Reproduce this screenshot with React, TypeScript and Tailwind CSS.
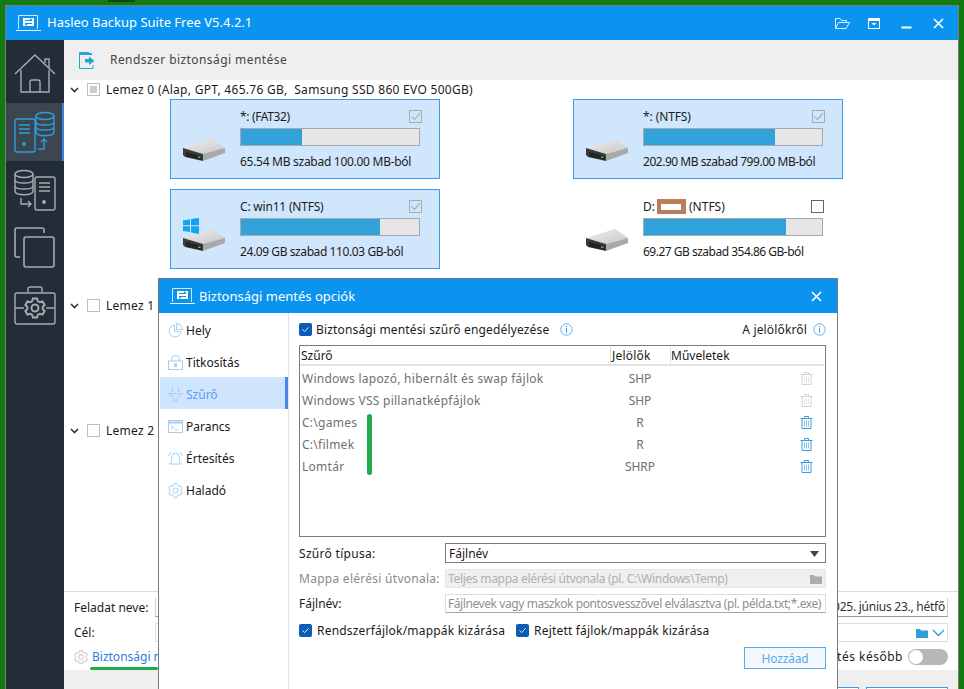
import React from "react";

const Drive = ({ windows = false }: { windows?: boolean }) => (
  <div className="relative h-[30px] w-[44px]">
    <svg className="absolute left-0 top-0" width="44" height="30" viewBox="0 0 44 30">
      <defs>
        <linearGradient id="drv" x1="0" y1="0" x2="1" y2="1">
          <stop offset="0" stopColor="#eeeeee" />
          <stop offset="1" stopColor="#c8c8c8" />
        </linearGradient>
      </defs>
      <path d="M0 17 L29 8 L42 17 L20 23Z" fill="url(#drv)" />
      <path d="M20 23 L42 17 V22 L20 30Z" fill="#a9a9a9" />
      <path d="M0 17 L20 23 V30 L2 26 L0 24Z" fill="#3a3a3a" />
      <path d="M3 21 L19 25 V29 L3 25.5Z" fill="#242424" />
      <rect x="15" y="25.5" width="2.5" height="1.5" fill="#22d33a" />
    </svg>
    {windows && (
      <svg className="absolute left-0 top-[-3px]" width="16" height="16" viewBox="0 0 16 16">
        <path d="M0 2.5 L7 1.3 V7.3 H0Z M8 1.1 L16 0 V7.3 H8Z M0 8.3 H7 V14 L0 13Z M8 8.3 H16 V16 L8 14.6Z" fill="#12a5ee" />
      </svg>
    )}
  </div>
);

const Bar = ({ pct }: { pct: number }) => (
  <div className="h-[18px] w-[180px] border border-[#a8a8a8] bg-[#e6e6e6]">
    <div className="h-full bg-[#31a2da]" style={{ width: `${pct}%` }} />
  </div>
);

const GrayCheck = () => (
  <div className="flex h-[13px] w-[13px] items-center justify-center border border-[#ababab]">
    <svg width="11" height="11" viewBox="0 0 11 11">
      <path d="M1.5 5.5 L4.5 8.5 L10 2" fill="none" stroke="#b5b5b5" strokeWidth="1.3" />
    </svg>
  </div>
);

type CardProps = {
  label: React.ReactNode;
  pct: number;
  text: string;
  selected?: boolean;
  windows?: boolean;
  labelCls: string;
  textCls: string;
};
const Card = ({ label, pct, text, selected = true, windows = false, labelCls, textCls }: CardProps) => (
  <div
    className={
      selected
        ? "flex h-[80px] w-[270px] border border-[#3c9bf0] bg-[#d0e6fc]"
        : "flex h-[80px] w-[270px] border border-white bg-white"
    }
  >
    <div className="w-[69px] pl-[12px] pt-[31px]">
      <Drive windows={windows} />
    </div>
    <div className="flex w-[180px] flex-col">
      <div className="flex h-[28px] items-end justify-between pb-[3px]">
        <span className={"leading-[17px] text-[#1c1c1c] " + labelCls}>{label}</span>
        <div className={selected ? "mb-[2px] mr-[-2px]" : "mb-[2px] mr-[-1px]"}>
          {selected ? <GrayCheck /> : <div className="h-[13px] w-[13px] border border-[#666666]" />}
        </div>
      </div>
      <Bar pct={pct} />
      <div className={"mt-[7px] whitespace-nowrap leading-[17px] text-[#1c1c1c] " + textCls}>{text}</div>
    </div>
  </div>
);

const Chevron = () => (
  <svg width="9" height="6" viewBox="0 0 9 6">
    <path d="M1 1 L4.5 4.5 L8 1" fill="none" stroke="#333333" strokeWidth="1.6" />
  </svg>
);

const DiskHead = ({ text, mixed = false }: { text: string; mixed?: boolean }) => (
  <div className="flex h-[19px] items-center whitespace-pre">
    <div className="ml-[6px] w-[17px]">
      <Chevron />
    </div>
    <div className="flex h-[13px] w-[13px] items-center justify-center border border-[#bdbdbd]">
      {mixed && <div className="h-[7px] w-[7px] bg-[#cccccc]" />}
    </div>
    <span className="ml-[6px] pt-[1px] tracking-[0.28px] text-[#1c1c1c]">{text}</span>
  </div>
);

const BlueCheck = () => (
  <div className="flex h-[13px] w-[13px] shrink-0 items-center justify-center rounded-[2px] bg-[#0b5cb5]">
    <svg width="9" height="9" viewBox="0 0 9 9">
      <path d="M1.5 4.5 L3.6 6.6 L7.5 2.4" fill="none" stroke="#dce9f7" strokeWidth="1" />
    </svg>
  </div>
);

const Info = () => (
  <svg width="13" height="13" viewBox="0 0 13 13">
    <circle cx="6.5" cy="6.5" r="5.7" fill="none" stroke="#62aef2" strokeWidth="1" />
    <rect x="6" y="3" width="1" height="1.2" fill="#3d97ea" />
    <rect x="6" y="5.2" width="1" height="4.6" fill="#3d97ea" />
  </svg>
);

const Trash = ({ active }: { active: boolean }) => {
  const c = active ? "#3a9fdc" : "#d2d2d2";
  return (
    <svg width="13" height="13" viewBox="0 0 13 13" fill="none" stroke={c} strokeWidth="1">
      <path d="M0.5 2.5 H12.5 M4.5 2.5 V0.5 H8.5 V2.5 M2 2.5 V12.5 H11 V2.5" />
      <path d="M4.5 4.5 V10.5 M6.5 4.5 V10.5 M8.5 4.5 V10.5" strokeOpacity="0.6" />
    </svg>
  );
};

const Logo = ({ blue }: { blue: string }) => (
  <svg width="25" height="16" viewBox="0 0 25 16">
    <path d="M2.5 14 V0.5 H21.5 V14" fill="none" stroke="#cfe9fd" strokeWidth="1" />
    <path d="M0 15.5 H25" stroke="#e6f4fe" strokeWidth="1" />
    <rect x="7" y="3" width="11" height="8" fill="#ffffff" />
    <path d="M9 5.5 H16 M14 3.8 L16 5.5 M9 8.5 H16 M11 10.2 L9 8.5" stroke={blue} strokeWidth="1.2" fill="none" />
  </svg>
);

const Gear = () => (
  <>
    <path d="M6 0.7 H9 L9.5 2.6 L11 3.4 L12.9 2.8 L14.4 5.4 L13 6.7 V8.3 L14.4 9.6 L12.9 12.2 L11 11.6 L9.5 12.4 L9 14.3 H6 L5.5 12.4 L4 11.6 L2.1 12.2 L0.6 9.6 L2 8.3 V6.7 L0.6 5.4 L2.1 2.8 L4 3.4 L5.5 2.6Z" />
    <circle cx="7.5" cy="7.5" r="2.5" />
  </>
);

const NavIcon = ({ name, c }: { name: string; c: string }) => {
  const p = { fill: "none", stroke: c, strokeWidth: 1 };
  return (
    <svg width="15" height="15" viewBox="0 0 15 15" {...p}>
      {name === "hely" && (
        <>
          <path d="M6.5 2 A6 6 0 1 0 13 8.5 H6.5Z" />
          <path d="M8.5 0.5 A6 6 0 0 1 14.5 6.5 H8.5Z" />
        </>
      )}
      {name === "lock" && (
        <>
          <rect x="0.5" y="6" width="14" height="8.5" />
          <path d="M3.5 6 V4 A4 3.5 0 0 1 11.5 4 V6" />
          <rect x="6.5" y="9" width="2" height="2.5" fill={c} />
        </>
      )}
      {name === "filter" && (
        <>
          <path d="M0.5 6.5 H14.5 L9 11 V14.5 H6 V11Z" />
          <path d="M4.5 0.5 V4 M3 3 L4.5 4.5 L6 3 M10.5 0.5 V4 M9 3 L10.5 4.5 L12 3" />
        </>
      )}
      {name === "term" && (
        <>
          <rect x="0.5" y="1.5" width="14" height="12" />
          <path d="M0.5 3.5 H14.5" strokeWidth="2" />
          <path d="M3 6.5 L5.5 8.5 L3 10.5 M7 11 H10" />
        </>
      )}
      {name === "bell" && (
        <>
          <path d="M3 11.5 C4 9 3 5 5 3 C6 2 9 2 10 3 C12 5 11 9 12 11.5 L13.5 13 H1.5Z" />
          <path d="M1 5 C1 3.5 2 2 3 1 M14 5 C14 3.5 13 2 12 1" />
        </>
      )}
      {name === "gear" && <Gear />}
    </svg>
  );
};

const SideItem = ({ active = false, tall = false, children }: { active?: boolean; tall?: boolean; children: React.ReactNode }) => (
  <div
    className={
      (tall ? "h-[63px] pt-[5px] " : "h-[58px] ") +
      (active ? "border-r-2 border-[#3b82e8] bg-[#3c4650] " : "") +
      "flex items-center pl-[8px]"
    }
  >
    {children}
  </div>
);

const rows = [
  ["Windows lapozó, hibernált és swap fájlok", "SHP", false],
  ["Windows VSS pillanatképfájlok", "SHP", false],
  ["C:\\games", "R", true],
  ["C:\\filmek", "R", true],
  ["Lomtár", "SHRP", true],
] as const;

const nav = [
  ["Hely", "hely"],
  ["Titkosítás", "lock"],
  ["Szűrő", "filter"],
  ["Parancs", "term"],
  ["Értesítés", "bell"],
  ["Haladó", "gear"],
];

export default function App() {
  return (
    <div className="relative h-[689px] w-[964px] overflow-hidden bg-[#107c10] pl-[5px] pt-[5px] font-['Noto_Sans',sans-serif] text-[12px]">
      <div className="absolute left-[108px] top-0 h-[2px] w-[27px] bg-[#0b4a14]" />
      <div className="flex h-[684px] w-[954px] flex-col border border-b-0 border-[#7b7b7b] bg-white">
        {/* title bar */}
        <div className="flex h-[34px] items-center bg-[#0a94f0] pl-[10px] text-white">
          <Logo blue="#0a94f0" />
          <span className="ml-[6px] text-[13px]">Hasleo Backup Suite Free V5.4.2.1</span>
          <div className="ml-auto flex items-center pr-[14px]">
            <svg width="15" height="11" viewBox="0 0 15 11" fill="none" stroke="#dff0ff" strokeWidth="1">
              <path d="M0.5 10.5 V0.5 H5 L6.5 2.5 H11.5 V4.5 M0.5 10.5 H11 L14.5 4.5 H3.5 L0.5 10.5" />
            </svg>
            <svg className="ml-[18px]" width="12" height="11" viewBox="0 0 12 11">
              <path d="M0.5 0.5 H11.5 V10.5 H0.5Z" fill="none" stroke="#ffffff" />
              <path d="M0.5 2 H11.5" stroke="#ffffff" strokeWidth="2" />
              <path d="M3.5 5 H8.5 L6 7.5Z" fill="#ffffff" />
            </svg>
            <svg className="ml-[21px]" width="11" height="11" viewBox="0 0 11 11">
              <path d="M0.5 9.5 H10.5" stroke="#ffffff" strokeWidth="2" />
            </svg>
            <svg className="ml-[21px]" width="11" height="11" viewBox="0 0 11 11">
              <path d="M1 1 L10 10 M10 1 L1 10" stroke="#ffffff" strokeWidth="1.7" />
            </svg>
          </div>
        </div>

        <div className="flex min-h-0 flex-1">
          {/* sidebar */}
          <div className="w-[58px] bg-[#232d38]">
            <SideItem tall>
              <svg width="42" height="40" viewBox="0 0 42 40" fill="none" stroke="#a6abb1" strokeWidth="1.4">
                <path d="M1 20 L21 1 L41 20 M31 9 V5 H35 V15" />
                <path d="M7 16 V38 H35 V16 M16 38 V28 Q16 26 18 26 H24 Q26 26 26 28 V38" />
              </svg>
            </SideItem>
            <SideItem active>
              <svg width="42" height="42" viewBox="0 0 42 42" fill="none" stroke="#2e9fd8" strokeWidth="1.4">
                <rect x="1" y="8" width="20" height="33" rx="2" />
                <path d="M5 14 H16 M5 18 H16 M5 22 H16" />
                <circle cx="10" cy="33" r="1.2" fill="#2e9fd8" />
                <ellipse cx="31" cy="5" rx="9" ry="3.5" />
                <path d="M22 5 V21 C22 26 40 26 40 21 V5 M22 11 C22 15 40 15 40 11 M22 16 C22 20 40 20 40 16" />
                <path d="M24 38 H30 V28 M27 31 L30 28 L33 31" />
              </svg>
            </SideItem>
            <SideItem>
              <svg width="42" height="42" viewBox="0 0 42 42" fill="none" stroke="#a6abb1" strokeWidth="1.4">
                <ellipse cx="10" cy="5" rx="9" ry="3.5" />
                <path d="M1 5 V22 C1 27 19 27 19 22 V5 M1 11 C1 15 19 15 19 11 M1 17 C1 21 19 21 19 17" />
                <rect x="21" y="8" width="20" height="33" rx="2" />
                <path d="M25 14 H36 M25 18 H36 M25 22 H36" />
                <circle cx="30" cy="33" r="1.2" fill="#a6abb1" />
                <path d="M7 29 V35 H17 M14 32 L17 35 L14 38" />
              </svg>
            </SideItem>
            <SideItem>
              <svg width="42" height="42" viewBox="0 0 42 42" fill="none" stroke="#a6abb1" strokeWidth="1.6">
                <rect x="10" y="10" width="30" height="30" rx="2" />
                <path d="M30 6 V3 Q30 1 28 1 H3 Q1 1 1 3 V28 Q1 30 3 30 H6" />
              </svg>
            </SideItem>
            <SideItem>
              <svg width="42" height="40" viewBox="0 0 42 40" fill="none" stroke="#a6abb1" strokeWidth="1.4">
                <rect x="1" y="7" width="40" height="31" rx="2" />
                <path d="M14 7 V3 Q14 1 16 1 H26 Q28 1 28 3 V7 M1 22 H10 M32 22 H41" />
                <g transform="translate(10.5 11.5) scale(1.4)">
                  <Gear />
                </g>
              </svg>
            </SideItem>
          </div>

          {/* main */}
          <div className="flex min-w-0 flex-1 flex-col">
            <div className="flex h-[40px] shrink-0 items-center bg-[#efefef] pl-[15px] text-[#444444]">
              <svg width="16" height="17" viewBox="0 0 16 17" fill="none">
                <path d="M10 0.5 H0.5 V16.5 H14 V13" stroke="#25a4d8" />
                <path d="M0.5 2 H13" stroke="#25a4d8" strokeWidth="2" />
                <path d="M6 7 H10 V4.5 L15.5 9 L10 13 V10.5 H6Z" fill="#25a4d8" />
              </svg>
              <span className="ml-[15px] tracking-[0.43px]">Rendszer biztonsági mentése</span>
            </div>
            <div className="min-h-0 flex-1">
              <DiskHead text="Lemez 0 (Alap, GPT, 465.76 GB,  Samsung SSD 860 EVO 500GB)" mixed />
              <div className="ml-[106px] grid grid-cols-[270px_270px] gap-x-[133px] gap-y-[10px]">
                <Card labelCls="tracking-[-0.35px]" textCls="tracking-[-0.28px]" label="*: (FAT32)" pct={34} text="65.54 MB szabad 100.00 MB-ból" />
                <Card labelCls="tracking-[-0.1px]" textCls="tracking-[-0.47px]" label="*: (NTFS)" pct={73.5} text="202.90 MB szabad 799.00 MB-ból" />
                <Card labelCls="tracking-[-0.2px]" textCls="tracking-[-0.41px]" label="C: win11 (NTFS)" pct={78} text="24.09 GB szabad 110.03 GB-ból" windows />
                <Card
                  labelCls=""
                  textCls="tracking-[-0.5px]"
                  selected={false}
                  pct={79.5}
                  text="69.27 GB szabad 354.86 GB-ból"
                  label={
                    <span className="flex items-center">
                      D:
                      <span className="ml-[2px] mr-[3px] flex h-[15px] w-[29px] items-center justify-center bg-[#b97f5c]">
                        <span className="h-[6px] w-[20px] bg-white" />
                      </span>
                      (NTFS)
                    </span>
                  }
                />
              </div>
              <div className="mt-[27px]">
                <DiskHead text="Lemez 1" />
              </div>
              <div className="mt-[106px]">
                <DiskHead text="Lemez 2" />
              </div>
            </div>

            {/* bottom form */}
            <div className="h-[79px] shrink-0 border-t border-[#dddddd] px-[10px] pt-[6px]">
              <div className="flex items-center">
                <span className="w-[81px] pt-[1px] text-[#1c1c1c]">Feladat neve:</span>
                <div className="flex h-[19px] min-w-0 flex-1 items-center justify-end overflow-hidden whitespace-nowrap border border-t-0 border-[#cfcfcf] border-b-[#999999] pr-[2px] tracking-[-0.25px] text-[#333333]">
                  2025. június 23., hétfő
                </div>
              </div>
              <div className="mt-[6px] flex items-center">
                <span className="w-[81px] pt-[1px] text-[#1c1c1c]">Cél:</span>
                <div className="flex h-[19px] flex-1 items-center justify-end border border-[#dddddd] pr-[2px]">
                  <svg width="12" height="10" viewBox="0 0 12 10">
                    <path d="M0 1 H4 L5 2.5 H12 V10 H0Z" fill="#2e9fd8" />
                  </svg>
                  <svg className="ml-[4px]" width="13" height="8" viewBox="0 0 13 8">
                    <path d="M1 1 L6.5 6.5 L12 1" fill="none" stroke="#2e9fd8" strokeWidth="1.4" />
                  </svg>
                </div>
              </div>
              <div className="mt-[6px] flex items-center">
                <svg width="14" height="14" viewBox="0 0 15 15" fill="none" stroke="#bdbdbd" strokeWidth="1">
                  <Gear />
                </svg>
                <span className="ml-[4px] text-[#2b7de0]">Biztonsági mentési opciók</span>
                <span className="ml-auto tracking-[0.5px] text-[#1c1c1c]">Mentés később</span>
                <div className="ml-[5px] flex h-[16px] w-[40px] items-center rounded-full bg-[#b5b8b8] pl-[1px]">
                  <div className="h-[14px] w-[14px] rounded-full bg-white" />
                </div>
              </div>
            </div>

            {/* footer */}
            <div className="flex h-[19px] shrink-0 justify-end gap-[7px] overflow-hidden bg-[#efefef] pr-[10px] pt-[17px]">
              <div className="h-[20px] w-[82px] border border-[#3c9bf0] bg-white" />
              <div className="h-[20px] w-[82px] border border-[#3c9bf0] bg-white" />
            </div>
          </div>
        </div>
      </div>

      {/* dialog */}
      <div className="absolute left-[158px] top-[278px] flex h-[411px] w-[680px] flex-col border-x border-t border-[#7b7b7b] bg-white">
        <div className="flex h-[34px] shrink-0 items-center bg-[#0a94f0] pl-[11px] text-white">
          <Logo blue="#0a94f0" />
          <span className="ml-[4px] pt-[1px] text-[13px]">Biztonsági mentés opciók</span>
          <svg className="ml-auto mr-[15px]" width="11" height="11" viewBox="0 0 11 11">
            <path d="M1 1 L10 10 M10 1 L1 10" stroke="#ffffff" strokeWidth="1.7" />
          </svg>
        </div>
        <div className="flex min-h-0 flex-1">
          <div className="w-[130px] border-r border-[#e2e2e2]">
            {nav.map(([t, n]) => {
              const sel = n === "filter";
              return (
                <div
                  key={t}
                  className={
                    sel
                      ? "ml-[1px] flex h-[32px] items-center border-r-[3px] border-[#4a86e8] bg-[#cfe5fd] pl-[8px] pt-[2px] text-[#5b9bf0]"
                      : "ml-[1px] flex h-[32px] items-center pl-[8px] pt-[2px] text-[#1a1a1a]"
                  }
                >
                  <NavIcon name={n} c="#a6cdf5" />
                  <span className="ml-[3px] pt-[1px]">{t}</span>
                </div>
              );
            })}
          </div>

          <div className="min-w-0 flex-1 pl-[10px] pr-[11px]">
            <div className="mt-[9px] flex h-[14px] items-center">
              <BlueCheck />
              <span className="ml-[4px] pt-[1px] tracking-[0.16px] text-[#1a1a1a]">Biztonsági mentési szűrő engedélyezése</span>
              <span className="ml-[11px]"><Info /></span>
              <span className="ml-auto mr-[6px] pt-[1px] tracking-[0.15px] text-[#1a1a1a]">A jelölőkről</span>
              <Info />
            </div>
            <div className="relative mt-[9px] h-[192px] border border-[#7b7b7b] pt-px">
              <div className="mr-[1px] flex h-[19px] items-center border-b-2 border-[#e2e2e2] pt-[1px] text-[#1a1a1a]">
                <span className="w-[310px] pl-[1px]">Szűrő</span>
                <span className="w-[60px] border-l border-[#e2e2e2] pl-[1px] tracking-[0.2px]">Jelölők</span>
                <span className="flex-1 border-l border-[#e2e2e2]">Műveletek</span>
              </div>
              <div className="pt-[1px]">
                {rows.map(([name, flag, act]) => (
                  <div key={name} className="flex h-[22px] items-center pt-[1px] text-[#707070]">
                    <span className="w-[310px] pl-[2px] tracking-[0.26px]">{name}</span>
                    <span className="w-[60px] text-center">{flag}</span>
                    <span className="flex flex-1 justify-end pr-[12px]">
                      <Trash active={act} />
                    </span>
                  </div>
                ))}
              </div>
              <div className="absolute left-[67px] top-[68px] h-[61px] w-[5px] rounded-full bg-[#22aa4f]" />
            </div>

            <div className="mt-[6px] flex h-[20px] items-center">
              <span className="w-[146px] pt-[1px] tracking-[0.3px] text-[#1a1a1a]">Szűrő típusa:</span>
              <div className="flex h-[20px] flex-1 items-center justify-between border border-[#7b7b7b] pl-[3px] pr-[6px] pt-[1px] text-[#1a1a1a]">
                Fájlnév
                <svg width="9" height="6" viewBox="0 0 9 6"><path d="M0 0 H9 L4.5 6Z" fill="#444444" /></svg>
              </div>
            </div>
            <div className="mt-[6px] flex h-[19px] items-center">
              <span className="w-[146px] whitespace-nowrap pt-[1px] tracking-[0.27px] text-[#8a8a8a]">Mappa elérési útvonala:</span>
              <div className="flex h-[19px] min-w-0 flex-1 items-center justify-between border border-[#e6e6e6] bg-[#efefef] pl-[2px] pr-[3px] pt-[1px] tracking-[-0.31px] text-[#b0b0b0]">
                Teljes mappa elérési útvonala (pl. C:\Windows\Temp)
                <svg width="12" height="10" viewBox="0 0 12 10"><path d="M0 1 H4 L5 2.5 H12 V10 H0Z" fill="#adadad" /></svg>
              </div>
            </div>
            <div className="mt-[6px] flex h-[19px] items-center">
              <span className="w-[146px] pt-[1px] text-[#1a1a1a]">Fájlnév:</span>
              <div className="flex h-[19px] min-w-0 flex-1 items-center overflow-hidden whitespace-nowrap border border-[#dddddd] border-b-[#a5a5a5] pl-[2px] pt-[1px] tracking-[-0.42px] text-[#8f8f8f]">
                Fájlnevek vagy maszkok pontosvesszővel elválasztva (pl. példa.txt;*.exe)
              </div>
            </div>
            <div className="mt-[11px] flex h-[13px] items-center">
              <BlueCheck />
              <span className="ml-[5px] pt-[1px] tracking-[0.2px] text-[#1a1a1a]">Rendszerfájlok/mappák kizárása</span>
              <span className="ml-[11px]"><BlueCheck /></span>
              <span className="ml-[5px] pt-[1px] tracking-[0.17px] text-[#1a1a1a]">Rejtett fájlok/mappák kizárása</span>
            </div>
            <div className="mt-[10px] flex justify-end">
              <div className="flex h-[22px] w-[82px] items-center justify-center border border-[#5aa9ea] bg-[#f4f8fc] pt-[1px] tracking-[-0.2px] text-[#5aa9ea]">
                Hozzáad
              </div>
            </div>
          </div>
        </div>
      </div>

      {/* hand-drawn underline on the link */}
      <div className="absolute left-[90px] top-[667px] h-[3px] w-[68px] rounded-full bg-[#22aa4f]" />
    </div>
  );
}
